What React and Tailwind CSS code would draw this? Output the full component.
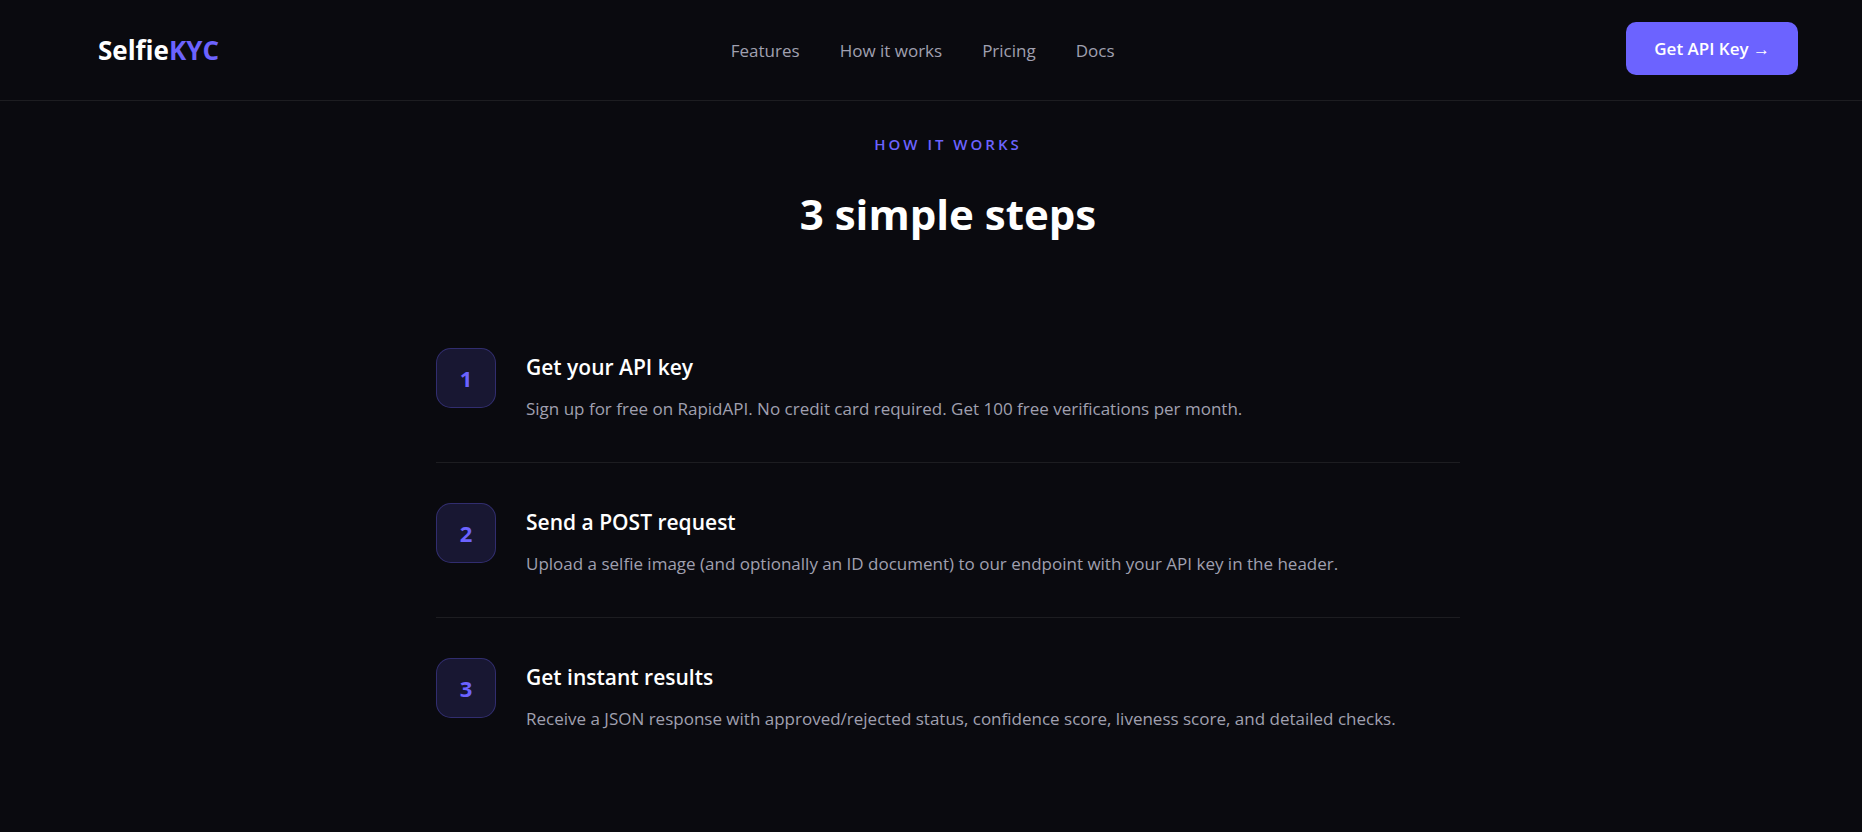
const NAV_LINKS = [
  { label: 'Features', href: '#features' },
  { label: 'How it works', href: '#how' },
  { label: 'Pricing', href: '#pricing' },
  { label: 'Docs', href: '#docs' },
];

const STEPS = [
  {
    title: 'Get your API key',
    text: 'Sign up for free on RapidAPI. No credit card required. Get 100 free verifications per month.',
  },
  {
    title: 'Send a POST request',
    text: 'Upload a selfie image (and optionally an ID document) to our endpoint with your API key in the header.',
  },
  {
    title: 'Get instant results',
    text: 'Receive a JSON response with approved/rejected status, confidence score, liveness score, and detailed checks.',
  },
];

function Navbar() {
  return (
    <nav className="flex items-center justify-between border-b border-white/8 pt-[22px] pb-[25px] pl-[98px] pr-16">
      <a href="#top" className="pt-0.5 text-[26px] leading-8 font-bold text-white">
        Selfie<span className="text-[#6c63ff]">KYC</span>
      </a>

      <div className="flex items-center gap-10 pt-1">
        {NAV_LINKS.map((link) => (
          <a key={link.href} href={link.href} className="text-[17px] leading-6 text-[#a0a0b0]">
            {link.label}
          </a>
        ))}
      </div>

      <button
        type="button"
        className="rounded-[10px] bg-[#6c63ff] px-7 py-[14px] text-[17px] leading-[25px] font-semibold text-white"
      >
        Get API Key →
      </button>
    </nav>
  );
}

function Step({ number, title, text }) {
  return (
    <li className="flex items-start gap-[30px] border-b border-white/8 py-10 last:border-b-0">
      <div className="flex size-[60px] shrink-0 items-center justify-center rounded-[15px] border border-[#6c63ff]/30 bg-[#6c63ff]/15 text-[22px] font-bold text-[#6c63ff]">
        {number}
      </div>
      <div className="pt-[3px]">
        <h3 className="mb-3 text-[21px] leading-8 font-semibold text-white">{title}</h3>
        <p className="text-[17px] leading-[27px] text-[#a0a0b0]">{text}</p>
      </div>
    </li>
  );
}

function HowItWorks() {
  return (
    <section id="how" className="pt-[31px] pb-20 pl-[34px]">
      {/* Section heading */}
      <div className="text-center">
        <p className="mb-5 text-[15px] leading-6 font-semibold tracking-[3px] text-[#6c63ff] uppercase">
          How it works
        </p>
        <h2 className="text-[42px] leading-[76px] font-bold text-white">3 simple steps</h2>
      </div>

      {/* Steps */}
      <ol className="mx-auto mt-14 max-w-5xl">
        {STEPS.map((step, index) => (
          <Step key={step.title} number={index + 1} title={step.title} text={step.text} />
        ))}
      </ol>
    </section>
  );
}

export default function App() {
  return (
    <div className="min-h-screen bg-[#0a0a0f] font-['Segoe_UI','Open_Sans',sans-serif]">
      <Navbar />
      <main>
        <HowItWorks />
      </main>
    </div>
  );
}
